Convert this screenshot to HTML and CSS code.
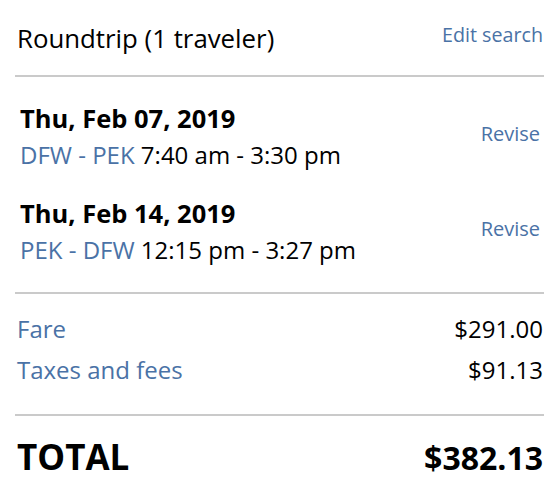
FILE: index.html
```html
<!DOCTYPE html>
<html>
<head>
<meta charset="utf-8">
<link rel="stylesheet" href="styles.css">
</head>
<body>
<div class="summary">
  <div class="header">
    <div class="title">Roundtrip (1 traveler)</div>
    <a class="link edit">Edit search</a>
  </div>
  <div class="flights">
    <div class="flight">
      <div class="info">
        <div class="date">Thu, Feb 07, 2019</div>
        <div class="route"><span class="link">DFW - PEK</span> 7:40 am - 3:30 pm</div>
      </div>
      <a class="link revise">Revise</a>
    </div>
    <div class="flight">
      <div class="info">
        <div class="date">Thu, Feb 14, 2019</div>
        <div class="route"><span class="link">PEK - DFW</span> 12:15 pm - 3:27 pm</div>
      </div>
      <a class="link revise">Revise</a>
    </div>
  </div>
  <div class="prices">
    <div class="row"><span class="link">Fare</span><span>$291.00</span></div>
    <div class="row"><span class="link">Taxes and fees</span><span>$91.13</span></div>
  </div>
  <div class="total">
    <span class="label">TOTAL</span><span class="amount">$382.13</span>
  </div>
</div>
</body>
</html>
```
FILE: styles.css
```css
html, body {
  margin: 0;
  padding: 0;
  background: #fff;
}
body {
  font-family: "Open Sans", sans-serif;
  color: #000;
}
.summary {
  margin-left: 15px;
  width: 529px;
}
.link {
  color: #4a72a6;
}
.header {
  display: flex;
  justify-content: space-between;
  align-items: flex-start;
  padding: 21px 1px 0 2px;
  height: 77px;
  box-sizing: border-box;
  border-bottom: 2px solid #cacaca;
}
.title {
  font-size: 25.8px;
  line-height: 34px;
}
.edit {
  font-size: 19.7px;
  line-height: 24px;
  margin-top: 2px;
}
.flights {
  padding: 24px 4px 23px 5px;
  border-bottom: 2px solid #cacaca;
  display: flex;
  flex-direction: column;
  gap: 22px;
}
.flight {
  display: flex;
  justify-content: space-between;
  align-items: center;
}
.date {
  font-weight: 700;
  font-size: 25.5px;
  line-height: 35px;
}
.route {
  font-size: 24px;
  line-height: 38px;
}
.revise {
  font-size: 20px;
  line-height: 26px;
  margin-bottom: 8px;
}
.prices {
  padding: 14px 1px 24px 2px;
  border-bottom: 2px solid #cacaca;
}
.row {
  display: flex;
  justify-content: space-between;
  font-size: 24px;
  line-height: 41px;
}
.total {
  display: flex;
  justify-content: space-between;
  align-items: baseline;
  padding: 18px 1px 0 2px;
  font-weight: 700;
}
.label {
  font-size: 35px;
  line-height: 46px;
}
.amount {
  font-size: 32px;
}
```
